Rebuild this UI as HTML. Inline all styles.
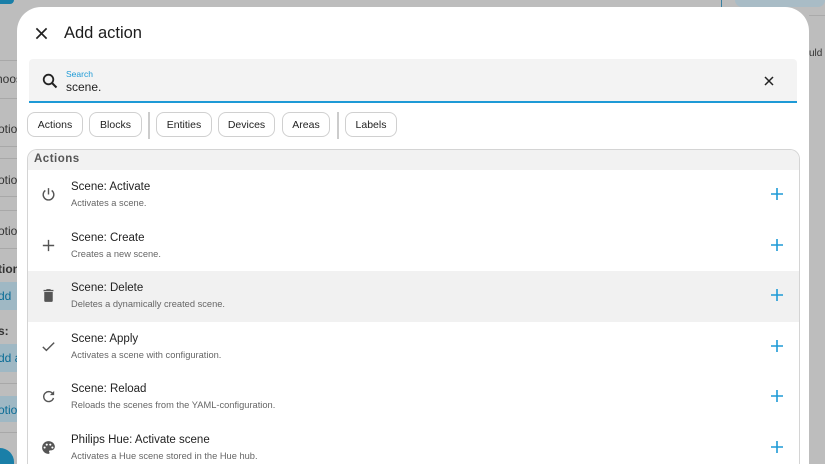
<!DOCTYPE html>
<html><head><style>
*{box-sizing:border-box;margin:0;padding:0}
html,body{width:825px;height:464px;overflow:hidden}
body{background:#bdbdbd;font-family:"Liberation Sans",sans-serif;position:relative;color:#212121}
.bg{position:absolute;left:0;font-size:12px;color:#333}
.ln{position:absolute;left:0;width:17px;height:1px;background:#a8a8a8}
.dlg{position:absolute;left:17px;top:7px;width:792px;height:457px;background:#fff;border-radius:24px 24px 0 0;overflow:hidden}
.title{position:absolute;left:47px;top:17px;font-size:16.5px;font-weight:500;color:#1c1c1c}
.search{position:absolute;left:12px;top:52px;width:768px;height:44px;background:#f3f3f3;border-radius:4px 4px 0 0;border-bottom:2px solid #1e9ad6}
.lbl{position:absolute;left:37px;top:10px;font-size:8.5px;color:#1e9ad6}
.val{position:absolute;left:37px;top:21px;font-size:12px;color:#222}
.chip{position:absolute;top:105px;height:25px;border:1px solid #d0d0d0;border-radius:8px;font-size:10.5px;line-height:24px;text-align:center;color:#222}
.sep{position:absolute;top:105px;width:2px;height:27px;background:#ccc}
.card{position:absolute;left:10px;top:142px;width:773px;height:315px;border:1px solid #d4d4d4;border-bottom:0;border-radius:10px 10px 0 0;overflow:hidden}
.hdr{height:20px;background:#f2f2f2;font-size:11.5px;font-weight:bold;color:#555;padding:3px 0 0 6px;letter-spacing:.5px}
.row{position:relative;height:50.5px}
.row.h{background:#f1f1f1}
.t{position:absolute;left:43px;top:11px;font-size:11.5px;color:#222}
.d{position:absolute;left:43px;top:28px;font-size:9.3px;color:#666}
.ic{position:absolute;left:12px;top:16px}
.pl{position:absolute;left:743px;top:18px}
</style></head><body>
<div class="bg" style="top:72px;left:-4px">hoos</div>
<div class="ln" style="top:60px"></div><div class="ln" style="top:98px"></div>
<div class="bg" style="top:122px;left:-2px">otio</div>
<div class="ln" style="top:146px"></div><div class="ln" style="top:158px"></div>
<div class="bg" style="top:173px;left:-2px">otio</div>
<div class="ln" style="top:196px"></div><div class="ln" style="top:210px"></div>
<div class="bg" style="top:224px;left:-2px">otio</div>
<div class="ln" style="top:248px"></div>
<div class="bg" style="top:262px;left:-2px;font-weight:bold">tion</div>
<div style="position:absolute;left:0;top:282px;width:17px;height:28px;background:#9fb8c4"></div>
<div class="bg" style="top:289px;left:-2px;color:#0a6c96">dd</div>
<div class="bg" style="top:324px;left:-2px;font-weight:bold">s:</div>
<div style="position:absolute;left:0;top:344px;width:17px;height:28px;background:#9fb8c4"></div>
<div class="bg" style="top:351px;left:-2px;color:#0a6c96">dd a</div>
<div class="ln" style="top:383px"></div>
<div style="position:absolute;left:0;top:396px;width:17px;height:26px;background:#9fb8c4"></div>
<div class="bg" style="top:403px;left:-2px;color:#0a6c96">otio</div>
<div class="ln" style="top:432px"></div>
<div style="position:absolute;left:0;top:448px;width:14px;height:16px;border-radius:0 14px 0 0;background:#1a7fa8"></div>
<div style="position:absolute;left:0;top:0;width:14px;height:4px;border-radius:0 0 10px 0;background:#1a7fa8"></div>
<div style="position:absolute;left:721px;top:0;width:1px;height:8px;background:#3a7fa0"></div>
<div style="position:absolute;left:735px;top:0;width:90px;height:7px;border-radius:0 0 8px 8px;background:#a9bcc6"></div>
<div class="bg" style="top:48px;left:809px;font-size:10px">uld</div>
<div style="position:absolute;left:809px;top:15px;width:16px;height:1px;background:#aaa"></div>

<div class="dlg">
<svg style="position:absolute;left:18px;top:20px" width="13" height="13" viewBox="0 0 14 14"><path d="M1.5 1.5L12.5 12.5M12.5 1.5L1.5 12.5" stroke="#222" stroke-width="1.8"/></svg>
<div class="title">Add action</div>
<div class="search">
<svg style="position:absolute;left:13px;top:14px" width="16" height="16" viewBox="0 0 16 16"><circle cx="6.5" cy="6.5" r="4.8" fill="none" stroke="#222" stroke-width="1.8"/><path d="M10 10L14.5 14.5" stroke="#222" stroke-width="2"/></svg>
<div class="lbl">Search</div><div class="val">scene.</div>
<svg style="position:absolute;left:735px;top:17px" width="10" height="10" viewBox="0 0 10 10"><path d="M1 1L9 9M9 1L1 9" stroke="#222" stroke-width="1.5"/></svg>
</div>
<div class="chip" style="left:10px;width:56px">Actions</div>
<div class="chip" style="left:72px;width:53px">Blocks</div>
<div class="sep" style="left:131px"></div>
<div class="chip" style="left:139px;width:56px">Entities</div>
<div class="chip" style="left:201px;width:57px">Devices</div>
<div class="chip" style="left:265px;width:48px">Areas</div>
<div class="sep" style="left:320px"></div>
<div class="chip" style="left:328px;width:52px">Labels</div>
<div class="card">
<div class="hdr">Actions</div>
<div class="row"><svg class="ic" width="17" height="17" viewBox="0 0 24 24"><path d="M12 3v9M7.5 6.2A7.5 7.5 0 1 0 16.5 6.2" fill="none" stroke="#555" stroke-width="2"/></svg><div class="t">Scene: Activate</div><div class="d">Activates a scene.</div><svg class="pl" width="12" height="12" viewBox="0 0 12 12"><path d="M6 0V12M0 6H12" stroke="#1e9ad6" stroke-width="1.6"/></svg></div>
<div class="row"><svg class="ic" width="17" height="17" viewBox="0 0 24 24"><path d="M12 4v16M4 12h16" stroke="#555" stroke-width="2"/></svg><div class="t">Scene: Create</div><div class="d">Creates a new scene.</div><svg class="pl" width="12" height="12" viewBox="0 0 12 12"><path d="M6 0V12M0 6H12" stroke="#1e9ad6" stroke-width="1.6"/></svg></div>
<div class="row h"><svg class="ic" width="17" height="17" viewBox="0 0 24 24"><path d="M6 19a2 2 0 0 0 2 2h8a2 2 0 0 0 2-2V7H6zM19 4h-3.5l-1-1h-5l-1 1H5v2h14z" fill="#555"/></svg><div class="t">Scene: Delete</div><div class="d">Deletes a dynamically created scene.</div><svg class="pl" width="12" height="12" viewBox="0 0 12 12"><path d="M6 0V12M0 6H12" stroke="#1e9ad6" stroke-width="1.6"/></svg></div>
<div class="row"><svg class="ic" width="17" height="17" viewBox="0 0 24 24"><path d="M4 12.5l5 5L20 6.5" fill="none" stroke="#555" stroke-width="2"/></svg><div class="t">Scene: Apply</div><div class="d">Activates a scene with configuration.</div><svg class="pl" width="12" height="12" viewBox="0 0 12 12"><path d="M6 0V12M0 6H12" stroke="#1e9ad6" stroke-width="1.6"/></svg></div>
<div class="row"><svg class="ic" width="17" height="17" viewBox="0 0 24 24"><path d="M18.5 9A7 7 0 1 0 19 14" fill="none" stroke="#555" stroke-width="2"/><path d="M20 4v6h-6z" fill="#555"/></svg><div class="t">Scene: Reload</div><div class="d">Reloads the scenes from the YAML-configuration.</div><svg class="pl" width="12" height="12" viewBox="0 0 12 12"><path d="M6 0V12M0 6H12" stroke="#1e9ad6" stroke-width="1.6"/></svg></div>
<div class="row"><svg class="ic" width="17" height="17" viewBox="0 0 24 24"><path d="M12 3a9 9 0 0 0 0 18c.8 0 1.5-.7 1.5-1.5 0-.4-.2-.7-.4-1-.2-.3-.4-.6-.4-1 0-.8.7-1.5 1.5-1.5H16a5 5 0 0 0 5-5c0-4.4-4-8-9-8z" fill="#555"/><circle cx="6.5" cy="12" r="1.5" fill="#fff"/><circle cx="9.5" cy="8" r="1.5" fill="#fff"/><circle cx="14.5" cy="8" r="1.5" fill="#fff"/><circle cx="17.5" cy="12" r="1.5" fill="#fff"/></svg><div class="t">Philips Hue: Activate scene</div><div class="d">Activates a Hue scene stored in the Hue hub.</div><svg class="pl" width="12" height="12" viewBox="0 0 12 12"><path d="M6 0V12M0 6H12" stroke="#1e9ad6" stroke-width="1.6"/></svg></div>
</div>
</div>
</body></html>
